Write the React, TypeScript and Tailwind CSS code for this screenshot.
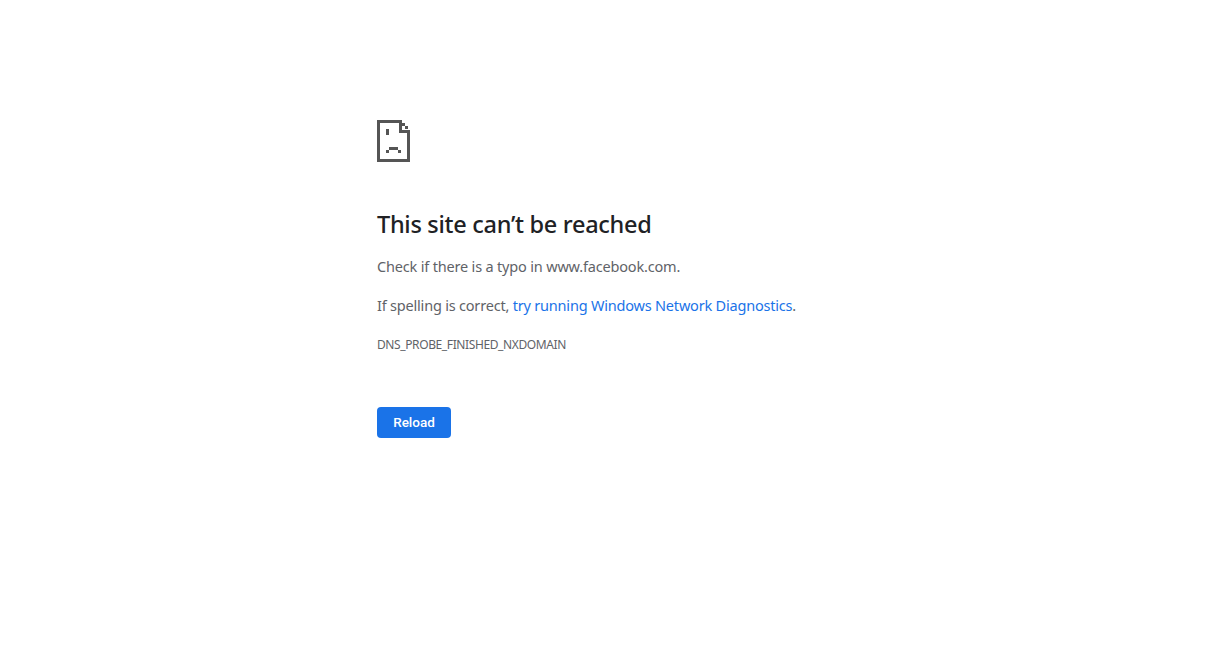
function SadPage() {
  return (
    <svg width="34" height="42" viewBox="0 0 34 42" className="block" fill="#555555" shapeRendering="crispEdges">
      {/* outline */}
      <rect x="0" y="0" width="3" height="42" />
      <rect x="0" y="0" width="25" height="3" />
      <rect x="0" y="39" width="33" height="3" />
      <rect x="30" y="10" width="3" height="32" />
      {/* folded corner */}
      <rect x="22" y="0" width="3" height="13" />
      <rect x="22" y="10" width="11" height="3" />
      <rect x="25" y="3" width="3" height="3" />
      <rect x="28" y="6" width="3" height="3" />
      {/* eye */}
      <rect x="9" y="9" width="3" height="6" />
      {/* mouth */}
      <rect x="12" y="27" width="9" height="3" />
      <rect x="9" y="30" width="3" height="3" />
      <rect x="21" y="30" width="3" height="3" />
    </svg>
  );
}

export default function App() {
  return (
    <div className="min-h-screen bg-white font-['Noto_Sans','Open_Sans',sans-serif]">
      <div className="ml-[377px] w-[600px] pt-[120px]">
        <SadPage />
        <h1 className="mt-[46px] text-[23.5px] leading-[32px] font-medium tracking-[-0.29px] text-[#202124]">
          This site can’t be reached
        </h1>
        <p className="mt-[16px] text-[14.5px] leading-[20px] tracking-[-0.18px] text-[#5f6368]">
          Check if there is a typo in www.facebook.com.
        </p>
        <p className="mt-[19px] text-[14.5px] leading-[20px] tracking-[-0.2px] text-[#5f6368]">
          If spelling is correct, <span className="text-[#1a73e8]">try running Windows Network Diagnostics</span>.
        </p>
        <div className="mt-[22px] text-[12px] leading-[16px] tracking-[-0.39px] text-[#5f6368]">
          DNS_PROBE_FINISHED_NXDOMAIN
        </div>
        <button className="mt-[54px] h-[31px] w-[74px] rounded-[4px] bg-[#1a73e8] font-['Roboto',sans-serif] text-[13.5px] font-medium text-white">
          Reload
        </button>
      </div>
    </div>
  );
}
